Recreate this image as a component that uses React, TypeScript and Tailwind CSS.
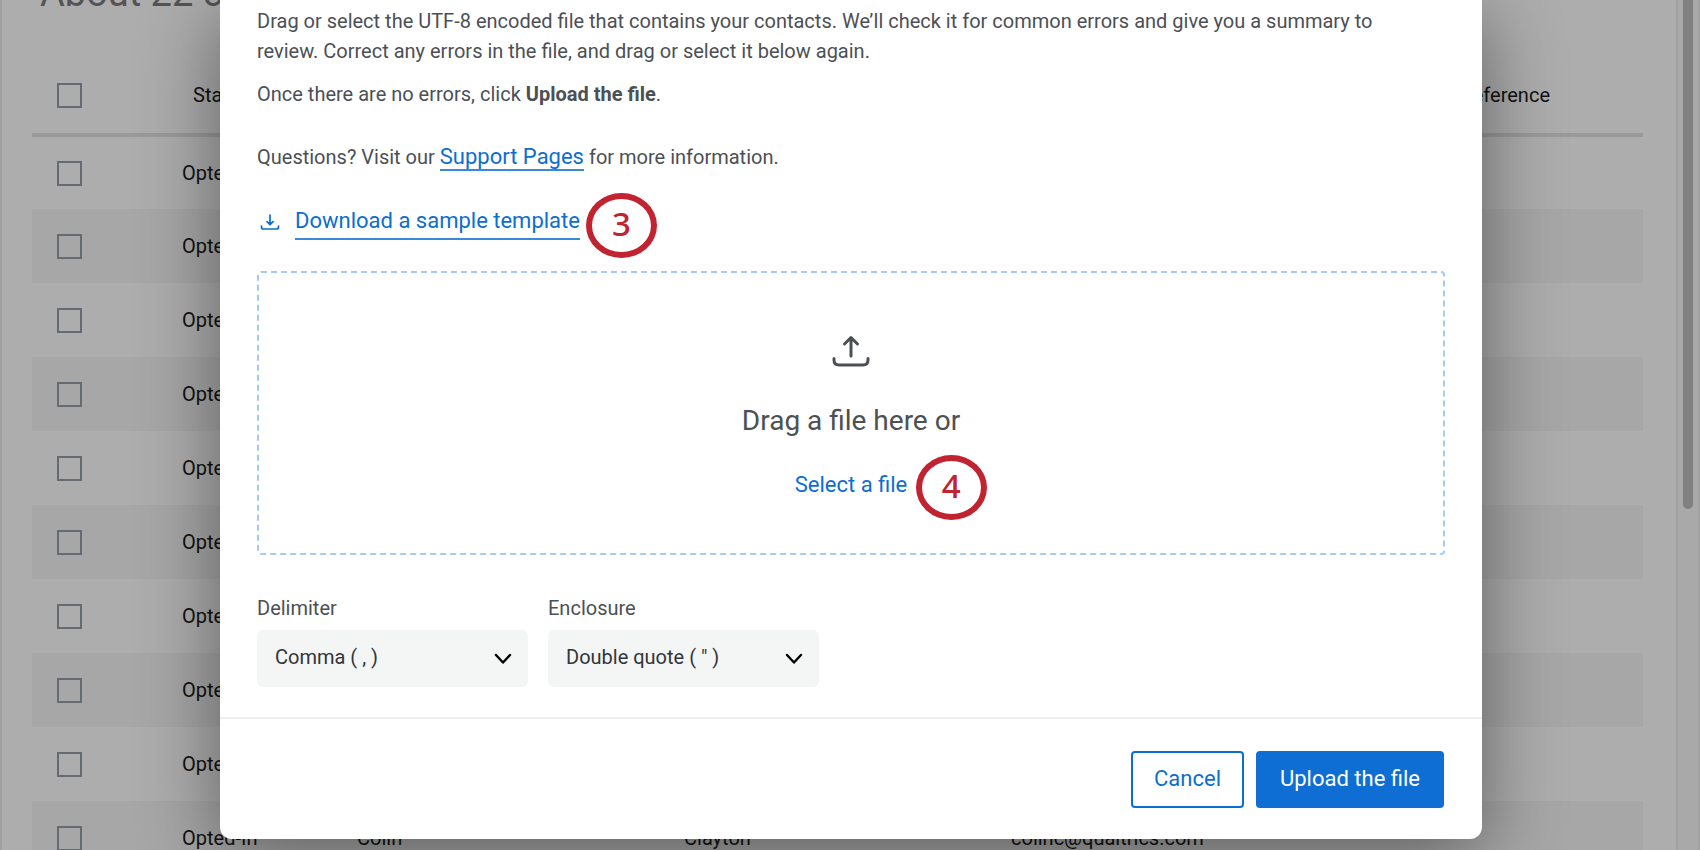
import React from "react";

interface Contact {
  status: string;
  firstName?: string;
  lastName?: string;
  email?: string;
}

const contacts: Contact[] = [
  { status: "Opted-In" },
  { status: "Opted-In" },
  { status: "Opted-In" },
  { status: "Opted-In" },
  { status: "Opted-In" },
  { status: "Opted-In" },
  { status: "Opted-In" },
  { status: "Opted-In" },
  { status: "Opted-In" },
  { status: "Opted-In", firstName: "Colin", lastName: "Clayton", email: "colinc@qualtrics.com" },
];

export default function App() {
  return (
    <div className="relative h-screen overflow-hidden bg-white font-[Roboto,sans-serif] text-xl">
      <ContactsPage />
      {/* Backdrop */}
      <div className="absolute inset-0 bg-black/32" />
      <div className="absolute inset-x-0 top-0 pl-[220px] pr-[218px]">
        <UploadModal />
      </div>
    </div>
  );
}

function ContactsPage() {
  return (
    <div className="flex h-full border-l-2 border-[#ececec]">
      <main className="flex-1 overflow-hidden pl-[30px] pr-[33px]">
        <h1 className="-mt-8 pl-2 text-[38px] leading-[50px] text-[#7c7c7c]">About 22 contacts</h1>
        <table className="mt-[39px] w-full table-fixed text-left text-[#1a1a1a]">
          <thead>
            <tr className="h-[78px] border-b-4 border-[#e4e4e4]">
              <th className="w-[150px] pl-[25px]">
                <Checkbox label="Select all contacts" />
              </th>
              <th className="w-[175px] pl-[11px] font-normal">Status</th>
              <th className="w-[327px]" />
              <th className="w-[327px]" />
              <th className="w-[327px]" />
              <th className="pr-[93px] text-right font-normal whitespace-nowrap">Language Preference</th>
            </tr>
          </thead>
          <tbody>
            {contacts.map((contact, i) => (
              <tr key={i} className="h-[74px] even:bg-[#f7f7f7]">
                <td className="pl-[25px]">
                  <Checkbox label={`Select contact ${i + 1}`} />
                </td>
                <td>{contact.status}</td>
                <td>{contact.firstName}</td>
                <td>{contact.lastName}</td>
                <td>{contact.email}</td>
                <td />
              </tr>
            ))}
          </tbody>
        </table>
      </main>
      {/* Scrollbar */}
      <div className="w-6 border-x-2 border-[#efefef] bg-[#fafafa] px-[5px]">
        <div className="h-[509px] rounded-b-full bg-[#bdbdbd]" />
      </div>
    </div>
  );
}

function Checkbox({ label }: { label: string }) {
  return (
    <input
      type="checkbox"
      aria-label={label}
      className="block size-[25px] appearance-none border-2 border-[#969ea6]"
    />
  );
}

function UploadModal() {
  return (
    <div
      role="dialog"
      aria-label="Upload a file"
      className="rounded-b-xl bg-white text-[#4c5055] shadow-[0_16px_80px_rgba(0,0,0,0.45)]"
    >
      <div className="px-[37px] pt-[6px] pb-[30px]">
        <p className="pr-5 leading-[30px]">
          Drag or select the UTF-8 encoded file that contains your contacts. We’ll check it for common errors and
          give you a summary to review. Correct any errors in the file, and drag or select it below again.
        </p>
        <p className="mt-[13px] leading-[30px]">
          Once there are no errors, click <strong className="font-bold">Upload the file</strong>.
        </p>
        <p className="mt-[33px] leading-[30px]">
          Questions? Visit our{" "}
          <a href="#support" className="border-b-2 border-[#3a88dc] text-[22px] text-[#0b6ed0]">
            Support Pages
          </a>{" "}
          for more information.
        </p>

        <div className="relative mt-8 flex items-center">
          <DownloadIcon />
          <a
            href="#template"
            className="ml-[14px] border-b-2 border-[#3a88dc] text-[22px] leading-[34px] text-[#0b6ed0]"
          >
            Download a sample template
          </a>
          <div className="absolute top-[-11px] left-[329px]">
            <StepBadge step={3} />
          </div>
        </div>

        {/* Drop zone */}
        <div className="mt-[31px] flex flex-col items-center rounded border-2 border-dashed border-[#a5cbf0] pt-[62px] pb-[50px]">
          <UploadIcon />
          <p className="mt-[34px] text-[28px] leading-10">Drag a file here or</p>
          <div className="relative mt-[26px]">
            <button className="text-[22px] leading-9 text-[#0b6ed0]">Select a file</button>
            <div className="absolute top-[-12px] left-[121px]">
              <StepBadge step={4} />
            </div>
          </div>
        </div>

        <div className="mt-[38px] flex gap-5">
          <SelectField id="delimiter" label="Delimiter" value="Comma ( , )" />
          <SelectField id="enclosure" label="Enclosure" value={'Double quote ( " )'} />
        </div>
      </div>

      <div className="flex justify-end gap-3 border-t-2 border-[#efefef] px-[38px] pt-8 pb-[31px]">
        <button className="h-[57px] rounded border-2 border-[#0b6ed0] px-[21px] text-[22px] text-[#0b6ed0]">
          Cancel
        </button>
        <button className="h-[57px] rounded bg-[#0f6ed3] px-6 text-[22px] text-white">Upload the file</button>
      </div>
    </div>
  );
}

interface SelectFieldProps {
  id: string;
  label: string;
  value: string;
}

function SelectField({ id, label, value }: SelectFieldProps) {
  return (
    <div className="flex w-[271px] flex-col">
      <label htmlFor={id} className="mb-[7px] leading-[30px]">
        {label}
      </label>
      <div className="relative">
        <select
          id={id}
          className="h-[57px] w-full appearance-none rounded-md bg-[#f4f5f5] pb-[3px] pl-[18px] text-[#32363a]"
        >
          <option>{value}</option>
        </select>
        <svg
          viewBox="0 0 18 12"
          className="pointer-events-none absolute top-[23px] right-4 h-3 w-[18px]"
          fill="none"
          stroke="#000"
          strokeWidth="2.4"
          strokeLinecap="round"
          strokeLinejoin="round"
        >
          <path d="M2 2 L9 9.5 L16 2" />
        </svg>
      </div>
    </div>
  );
}

function StepBadge({ step }: { step: number }) {
  return (
    <div className="flex h-[65px] w-[71px] justify-center rounded-[50%] border-6 border-[#c22331] bg-white font-['Noto_Sans',sans-serif] text-[33px] leading-[50px] font-medium text-[#c22331]">
      {step}
    </div>
  );
}

function DownloadIcon() {
  return (
    <svg
      viewBox="0 0 22 22"
      className="ml-0.5 size-[22px]"
      fill="none"
      stroke="#0b6ed0"
      strokeWidth="1.7"
      strokeLinecap="round"
      strokeLinejoin="round"
    >
      <path d="M11 4 V13.5 M8 10.700 L11 13.700 L14 10.700" />
      <path d="M2.500 15 V16 Q2.500 18 4.500 18 H17.500 Q19.500 18 19.500 16 V15" />
    </svg>
  );
}

function UploadIcon() {
  return (
    <svg
      viewBox="0 0 38 32"
      className="h-8 w-[38px]"
      fill="none"
      stroke="#4c5055"
      strokeWidth="3"
      strokeLinecap="round"
      strokeLinejoin="round"
    >
      <path d="M19 21 V3 M12.500 9 L19 2.500 L25.500 9" />
      <path d="M2 23.500 V25 Q2 30 7 30 H31 Q36 30 36 25 V23.500" />
    </svg>
  );
}
